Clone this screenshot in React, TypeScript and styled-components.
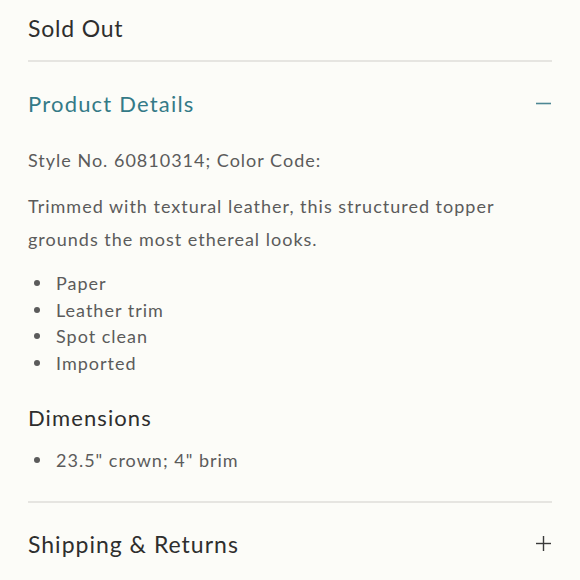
import React from 'react';
import styled, { createGlobalStyle } from 'styled-components';

const GlobalStyle = createGlobalStyle`
  html, body {
    margin: 0;
    padding: 0;
    background: #fcfcf8;
  }
  body {
    font-family: Lato, "Noto Sans", sans-serif;
    -webkit-font-smoothing: antialiased;
  }
`;

const Page = styled.div`
  width: 580px;
  height: 580px;
  overflow: hidden;
  padding: 0 28px;
  box-sizing: border-box;
  background: #fcfcf8;
`;

const Status = styled.div`
  font-size: 23px;
  color: #2e2e2e;
  letter-spacing: 0.8px;
  padding-top: 12px;
  height: 48px;
  line-height: 32px;
  border-bottom: 2px solid #e6e5e1;
`;

const SectionHead = styled.div<{ $open?: boolean }>`
  display: flex;
  align-items: center;
  justify-content: space-between;
  height: 82px;
  font-size: ${p => (p.$open ? '22px' : '23px')};
  color: ${p => (p.$open ? '#347a87' : '#2e2e2e')};
  letter-spacing: ${p => (p.$open ? '1.2px' : '1px')};
`;

const Body = styled.div`
  color: #5b5b5b;
  font-size: 18px;
  letter-spacing: 1px;
  padding-bottom: 27px;
  border-bottom: 2px solid #e6e5e1;
`;

const Line = styled.p`
  margin: 0;
  line-height: 32px;
`;

const Para = styled.p`
  margin: 14px 0 0;
  line-height: 33px;
`;

const List = styled.ul<{ $gap?: number }>`
  list-style: none;
  margin: ${p => p.$gap ?? 0}px 0 0;
  padding: 0;
`;

const Bullet = styled.li`
  display: flex;
  align-items: center;
  height: 26.5px;
  &::before {
    content: '';
    width: 6px;
    height: 6px;
    border-radius: 50%;
    background: #5b5b5b;
    margin: 0 16px 0 6px;
  }
`;

const SubHead = styled.h3`
  margin: 26px 0 13px;
  font-weight: 400;
  font-size: 22px;
  color: #2e2e2e;
  letter-spacing: 1.1px;
  line-height: 32px;
`;

const Icon = styled.svg`
  width: 17px;
  height: 17px;
`;

const Minus = ({ color }: { color: string }) => (
  <Icon viewBox="0 0 17 17">
    <line x1="1" y1="8.5" x2="16" y2="8.5" stroke={color} strokeWidth="1.6" />
  </Icon>
);

const Plus = ({ color }: { color: string }) => (
  <Icon viewBox="0 0 17 17">
    <line x1="1" y1="8.5" x2="16" y2="8.5" stroke={color} strokeWidth="1.4" />
    <line x1="8.5" y1="1" x2="8.5" y2="16" stroke={color} strokeWidth="1.4" />
  </Icon>
);

const materials = ['Paper', 'Leather trim', 'Spot clean', 'Imported'];

export default function App() {
  return (
    <>
      <GlobalStyle />
      <Page>
        <Status>Sold Out</Status>
        <SectionHead $open>
          <span>Product Details</span>
          <Minus color="#4d8794" />
        </SectionHead>
        <Body>
          <Line>Style No. 60810314; Color Code:</Line>
          <Para>
            Trimmed with textural leather, this structured topper
            <br />
            grounds the most ethereal looks.
          </Para>
          <List $gap={14}>
            {materials.map(m => (
              <Bullet key={m}>{m}</Bullet>
            ))}
          </List>
          <SubHead>Dimensions</SubHead>
          <List>
            <Bullet>23.5" crown; 4" brim</Bullet>
          </List>
        </Body>
        <SectionHead>
          <span>Shipping &amp; Returns</span>
          <Plus color="#3a3a3a" />
        </SectionHead>
      </Page>
    </>
  );
}
